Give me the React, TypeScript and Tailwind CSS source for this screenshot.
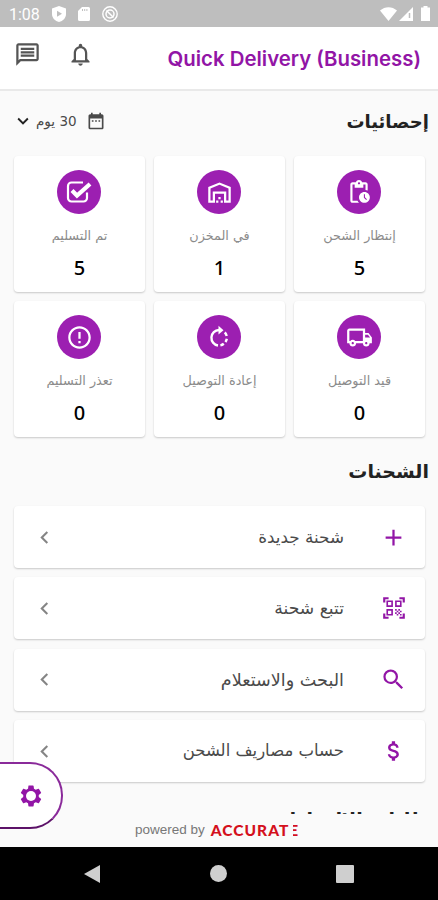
import React from 'react';
import type { IconType } from 'react-icons';
import {
  MdAdd,
  MdAttachMoney,
  MdDateRange,
  MdErrorOutline,
  MdKeyboardArrowDown,
  MdKeyboardArrowLeft,
  MdNotificationsNone,
  MdOutlineLocalShipping,
  MdOutlineMessage,
  MdOutlineWarehouse,
  MdPendingActions,
  MdQrCodeScanner,
  MdSearch,
  MdSettings,
} from 'react-icons/md';

interface Stat {
  label: string;
  value: number;
  icon: React.ReactNode;
}

interface Action {
  label: string;
  icon: IconType;
  size: number;
  labelClass: string;
}

const CheckBoxIcon: React.FC = () => (
  <svg width="26" height="24" viewBox="0 0 26 24" fill="none" stroke="currentColor">
    <path d="M21 12.500V18a3.500 3.500 0 0 1-3.500 3.500H5.500A3.500 3.500 0 0 1 2 18V6a3.500 3.500 0 0 1 3.500-3.500H17" strokeWidth="2.200" />
    <path d="M6 10.500l5 5L24 4" strokeWidth="4.200" />
  </svg>
);

const RotateIcon: React.FC = () => (
  <svg width="24" height="24" viewBox="0 0 24 24" fill="none" stroke="currentColor" strokeWidth="2.400">
    <path d="M13.500 5H12a7.800 7.800 0 0 0-1 15.500" />
    <path d="M11.500 0.800l5 4.400-5 4.400z" fill="currentColor" stroke="none" />
    <path d="M17.800 7.400a8 8 0 0 1 1.900 3.600M19.800 13.800a8 8 0 0 1-1.400 3.200M16.800 18.800a8 8 0 0 1-3.400 1.600" />
  </svg>
);

const stats: Stat[] = [
  { label: 'إنتظار الشحن', value: 5, icon: <MdPendingActions size={26} /> },
  { label: 'في المخزن', value: 1, icon: <MdOutlineWarehouse size={27} /> },
  { label: 'تم التسليم', value: 5, icon: <CheckBoxIcon /> },
  { label: 'قيد التوصيل', value: 0, icon: <MdOutlineLocalShipping size={27} /> },
  { label: 'إعادة التوصيل', value: 0, icon: <RotateIcon /> },
  { label: 'تعذر التسليم', value: 0, icon: <MdErrorOutline size={27} /> },
];

const actions: Action[] = [
  { label: 'شحنة جديدة', icon: MdAdd, size: 27, labelClass: 'text-[16.8px]' },
  { label: 'تتبع شحنة', icon: MdQrCodeScanner, size: 26, labelClass: 'text-[17.2px]' },
  { label: 'البحث والاستعلام', icon: MdSearch, size: 27, labelClass: 'text-[17.6px]' },
  { label: 'حساب مصاريف الشحن', icon: MdAttachMoney, size: 26, labelClass: 'text-[16.5px]' },
];

const StatusBar: React.FC = () => (
  <div className="flex h-[27px] shrink-0 items-center justify-between bg-[#bebebe] pl-[9px] pr-2 text-white">
    <div className="flex items-center gap-3">
      <span className="w-[31px] pt-0.5 font-[Roboto] text-[16px] leading-none">1:08</span>
      <svg width="14" height="16" viewBox="0 0 14 16">
        <path d="M7 0l7 2.500v5.500c0 4-3 7-7 8-4-1-7-4-7-8V2.500z" fill="currentColor" />
        <path d="M5 4.800l5 3-5 3z" fill="#bebebe" />
      </svg>
      <svg width="12" height="14" viewBox="0 0 12 14">
        <path d="M4 0h6.500A1.500 1.500 0 0 1 12 1.500v11a1.500 1.500 0 0 1-1.500 1.500h-9A1.500 1.500 0 0 1 0 12.500V4z" fill="currentColor" />
        <path d="M4.500 2v2M6.700 2v2M8.900 2v2" stroke="#bebebe" />
      </svg>
      <svg width="16" height="16" viewBox="0 0 16 16" fill="none" stroke="currentColor">
        <circle cx="8" cy="8" r="7.200" strokeWidth="1.400" />
        <circle cx="8" cy="8" r="4" strokeWidth="1.500" />
        <path d="M4.500 4.500l7 7" strokeWidth="1.500" />
      </svg>
    </div>
    <div className="flex items-center">
      <svg width="17" height="14" viewBox="0 0 17 14">
        <path d="M8.500 14L0 3.500C5-1 12-1 17 3.500z" fill="currentColor" />
      </svg>
      <svg className="ml-0.5" width="14" height="14" viewBox="0 0 14 14">
        <path d="M14 0v14H0z" fill="currentColor" />
        <path d="M10.500 6v5" stroke="#bebebe" strokeWidth="1.500" />
      </svg>
      <svg className="ml-2" width="9" height="15" viewBox="0 0 9 15">
        <path d="M2.500 0h4v1.500H9V15H0V1.500h2.500z" fill="currentColor" />
      </svg>
    </div>
  </div>
);

const Header: React.FC = () => (
  <header className="flex h-16 shrink-0 justify-between border-b-2 border-[#e9e9e9] bg-white pl-[14px] pr-[17px]">
    <div className="flex gap-[26px] pt-[14px] text-[#555]">
      <MdOutlineMessage size={27} />
      <MdNotificationsNone size={27} />
    </div>
    <h1 className="pt-[17px] font-[Inter] text-[20.4px] font-semibold leading-[30px] text-[#9215a6]">
      Quick Delivery (Business)
    </h1>
  </header>
);

const StatCard: React.FC<{ stat: Stat }> = ({ stat }) => (
  <div className="flex h-[136px] flex-col items-center rounded bg-white pt-[14px] shadow-[0_1px_2px_rgba(0,0,0,0.2)]">
    <div className="mr-px flex h-11 w-11 items-center justify-center rounded-full bg-[#9c1fb1] text-white">{stat.icon}</div>
    <p className="mt-3 whitespace-nowrap text-[12.8px] leading-5 text-[#8b8b8b]">{stat.label}</p>
    <p className="mt-2 font-['Noto_Sans'] text-[20px] font-medium leading-7 text-black">{stat.value}</p>
  </div>
);

const ActionRow: React.FC<{ action: Action }> = ({ action }) => {
  const Icon = action.icon;
  return (
    <div className="flex h-[62px] shrink-0 items-center rounded bg-white pl-[18px] pr-[18px] shadow-[0_1px_2px_rgba(0,0,0,0.2)]">
      <div className="flex w-[27px] justify-center text-[#9215a6]">
        <Icon size={action.size} />
      </div>
      <span className={`mr-9 flex-1 whitespace-nowrap leading-6 text-[#4a4a4a] ${action.labelClass}`}>{action.label}</span>
      <MdKeyboardArrowLeft size={25} className="text-[#858585]" />
    </div>
  );
};

const Footer: React.FC = () => (
  <div className="flex h-[33px] shrink-0 items-center bg-[#fafafa] pl-[135px]">
    <span className="font-['Liberation_Sans'] text-[13.500px] text-[#777]">powered by</span>
    {/* The last letter of the wordmark has no stem */}
    <span className="relative ml-[6px] font-[Lato] text-[15.500px] font-black tracking-[1px] text-[#d4101c] before:absolute before:right-[6px] before:top-0 before:h-full before:w-[4px] before:bg-[#fafafa] before:content-['']">
      ACCURATE
    </span>
  </div>
);

const App: React.FC = () => {
  return (
    <div className="relative flex h-[900px] w-[438px] flex-col overflow-hidden bg-[#fafafa]">
      <StatusBar />
      <Header />

      <main dir="rtl" className="flex min-h-0 flex-1 flex-col overflow-hidden font-['DejaVu_Sans',sans-serif]">
        <div className="flex h-[65px] shrink-0 items-center justify-between pb-[5px] pl-[12px] pr-[9px]">
          <h2 className="text-[18px] font-bold text-[#222]">إحصائيات</h2>
          <div className="flex items-center text-[#4a4a4a]">
            <MdDateRange size={20} className="ml-[9px]" />
            <span className="ml-0.5 text-[13.500px]">30 يوم</span>
            <MdKeyboardArrowDown size={22} className="text-[#222]" />
          </div>
        </div>

        <div className="grid shrink-0 grid-cols-[131px_131px_131px] gap-x-[9px] gap-y-[9px] pr-[13px]">
          {stats.map((stat) => (
            <StatCard key={stat.label} stat={stat} />
          ))}
        </div>

        <h2 className="h-[69px] shrink-0 pr-[9px] text-[19px] font-bold leading-[69px] text-[#222]">الشحنات</h2>

        <div className="flex shrink-0 flex-col gap-[9.400px] pl-[14px] pr-[13px]">
          {actions.map((action) => (
            <ActionRow key={action.label} action={action} />
          ))}
        </div>

        <h2 className="shrink-0 pr-[9px] pt-[22px] text-[19px] font-bold leading-[30px] text-[#222]">طلبات الالتقاط</h2>
      </main>

      <Footer />

      {/* Android navigation */}
      <nav className="flex h-[53px] shrink-0 items-center justify-between bg-black pl-[83px] pr-[84px] text-[#cfcfcf]">
        <svg width="18" height="20" viewBox="0 0 18 20">
          <path d="M17 1v18L1 10z" fill="currentColor" />
        </svg>
        <div className="h-[17px] w-[17px] rounded-full bg-[#cfcfcf]" />
        <div className="h-[18px] w-[18px] rounded-[1px] bg-[#cfcfcf]" />
      </nav>

      {/* Floating settings tab */}
      <button className="absolute -left-1 top-[762px] flex h-[67px] w-[67px] items-center rounded-r-[33px] border-2 border-[#8a2a9a] border-b-[#5c1268] bg-white pl-[20px] text-[#9215a6]">
        <span className="grid place-items-center">
          <MdSettings size={26} className="col-start-1 row-start-1" />
          <span className="col-start-1 row-start-1 h-2.5 w-2.5 rounded-full bg-white" />
        </span>
      </button>
    </div>
  );
};

export default App;
